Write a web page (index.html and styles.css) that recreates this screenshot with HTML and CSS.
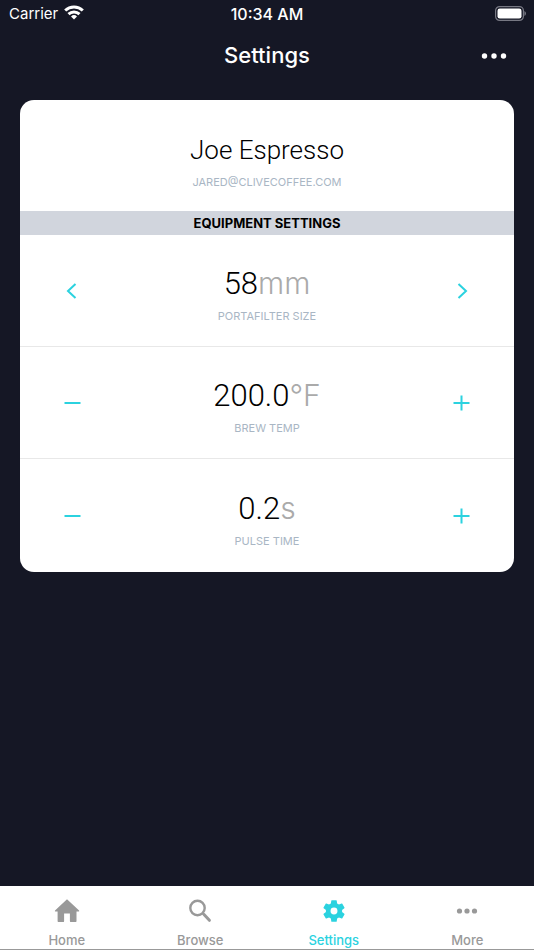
FILE: index.html
```html
<!DOCTYPE html>
<html lang="en">
<head>
<meta charset="utf-8">
<meta name="viewport" content="width=device-width, initial-scale=1">
<title>Settings</title>
<link rel="stylesheet" href="styles.css">
</head>
<body>
<div class="app">
  <div class="status">
    <div class="carrier">Carrier
      <svg width="20" height="15" viewBox="0 0 20 15" fill="none" stroke="#fff" stroke-width="3"><path d="M1.2 5.5a12.8 12.8 0 0 1 17.6 0"/><path d="M4.5 9.2a8 8 0 0 1 11 0"/><path d="M10 14.5 7 11.5a4.4 4.4 0 0 1 6 0z" fill="#fff" stroke="none"/></svg>
    </div>
    <time class="clock">10:34 AM</time>
    <svg class="battery" width="31" height="15" viewBox="0 0 31 15"><rect x=".6" y=".6" width="27.8" height="13.8" rx="4" fill="none" stroke="#777883" stroke-width="1.2"/><rect x="2.5" y="2.5" width="24" height="10" rx="2.3" fill="#fff"/><path d="M29.4 5v5q1.6-.8 1.6-2.5T29.4 5z" fill="#777883"/></svg>
  </div>
  <header class="nav">
    <h1>Settings</h1>
    <button class="menu" aria-label="Options"><svg width="26" height="6" viewBox="0 0 26 6" fill="#fff"><circle cx="3.5" cy="3" r="2.7"/><circle cx="13" cy="3" r="2.7"/><circle cx="22.5" cy="3" r="2.7"/></svg></button>
  </header>
  <main>
    <section class="card">
      <div class="profile">
        <h2 class="name">Joe Espresso</h2>
        <p class="caption">JARED@CLIVECOFFEE.COM</p>
      </div>
      <h3 class="band">EQUIPMENT SETTINGS</h3>
      <div class="row">
        <button class="step" aria-label="Previous size"><svg width="18" height="18" viewBox="0 0 18 18"><path d="M12.5 2 5 9l7.5 7"/></svg></button>
        <div class="reading"><p class="value">58<span>mm</span></p><p class="caption">PORTAFILTER SIZE</p></div>
        <button class="step" aria-label="Next size"><svg width="18" height="18" viewBox="0 0 18 18"><path d="m5.5 2 7.5 7-7.5 7"/></svg></button>
      </div>
      <div class="row">
        <button class="step" aria-label="Decrease brew temp"><svg width="18" height="18" viewBox="0 0 18 18"><path d="M1.5 9h16"/></svg></button>
        <div class="reading"><p class="value">200.0<span>°F</span></p><p class="caption">BREW TEMP</p></div>
        <button class="step" aria-label="Increase brew temp"><svg width="18" height="18" viewBox="0 0 18 18"><path d="M.5 9h16M8.500 1.500v15"/></svg></button>
      </div>
      <div class="row">
        <button class="step" aria-label="Decrease pulse time"><svg width="18" height="18" viewBox="0 0 18 18"><path d="M1.5 9h16"/></svg></button>
        <div class="reading"><p class="value">0.2<span>s</span></p><p class="caption">PULSE TIME</p></div>
        <button class="step" aria-label="Increase pulse time"><svg width="18" height="18" viewBox="0 0 18 18"><path d="M.5 9h16M8.500 1.500v15"/></svg></button>
      </div>
    </section>
  </main>
  <nav class="tabs">
    <a href="#home"><svg width="26" height="26" viewBox="0 0 26 26"><path d="M13 1.200 1 12.600q-.5 1 .4 1h2.200v9.300q0 1.200 1.200 1.200h4.200q1.100 0 1.100-1.200v-7.300h5.800v7.300q0 1.200 1.200 1.200h4.200q1.200 0 1.200-1.200v-9.300h2.200q.9 0 .4-1z"/></svg>Home</a>
    <a href="#browse"><svg width="26" height="26" viewBox="0 0 26 26" fill="none" stroke="#999" stroke-width="2.4"><circle cx="10.500" cy="10" r="7.200" fill="none"/><path d="m15.500 15 1.500 1.500"/><path d="m17 16.500 5.400 5.800" stroke-width="3" stroke-linecap="round"/></svg>Browse</a>
    <a href="#settings" class="active" aria-current="page"><svg width="26" height="26" viewBox="0 0 24 24"><path d="M19.43 12.98c.04-.32.07-.64.07-.98s-.03-.66-.07-.98l2.11-1.65c.19-.15.24-.42.12-.64l-2-3.46c-.12-.22-.39-.3-.61-.22l-2.49 1c-.52-.4-1.08-.73-1.69-.98l-.38-2.65A.488.488 0 0 0 14 2h-4c-.25 0-.46.18-.49.42l-.38 2.65c-.61.25-1.17.59-1.69.98l-2.49-1c-.23-.09-.49 0-.61.22l-2 3.46c-.13.22-.07.49.12.64l2.11 1.65c-.04.32-.07.65-.07.98s.03.66.07.98l-2.11 1.65c-.19.15-.24.42-.12.64l2 3.46c.12.22.39.3.61.22l2.49-1c.52.4 1.08.73 1.69.98l.38 2.65c.03.24.24.42.49.42h4c.25 0 .46-.18.49-.42l.38-2.65c.61-.25 1.17-.59 1.69-.98l2.49 1c.23.09.49 0 .61-.22l2-3.46c.12-.22.07-.49-.12-.64l-2.11-1.65zM12 15.200a3.200 3.200 0 1 1 0-6.400 3.200 3.200 0 0 1 0 6.400z"/></svg>Settings</a>
    <a href="#more"><svg width="26" height="26" viewBox="0 0 26 26"><circle cx="5.500" cy="13" r="2.600"/><circle cx="13" cy="13" r="2.600"/><circle cx="20.500" cy="13" r="2.600"/></svg>More</a>
  </nav>
</div>
</body>
</html>
```
FILE: styles.css
```css
* { box-sizing: border-box; }
body { margin: 0; background: #151725; color: #000; font-family: Inter, "Liberation Sans", sans-serif; }
h1, h2, h3, p { margin: 0; font-weight: 400; }
button { padding: 0; border: 0; background: none; cursor: pointer; }
svg { display: block; }
.app { min-height: 100vh; display: flex; flex-direction: column; }
.status { display: grid; grid-template-columns: 1fr auto 1fr; align-items: center; height: 27px; padding: 0 8px; color: #fff; font-size: 15px; }
.carrier { display: flex; align-items: center; gap: 6px; padding-left: 1px; }
.carrier svg { margin-bottom: 2px; }
.clock { font-weight: 500; font-size: 16px; }
.battery { justify-self: end; }
.nav { display: grid; grid-template-columns: 1fr auto 1fr; align-items: center; height: 56px; padding: 0 27px; color: #fff; }
.nav h1 { grid-column: 2; font-size: 22px; line-height: 28px; font-weight: 500; }
.menu { justify-self: end; padding-top: 2px; }
main { flex: 1; padding: 17px 20px; }
.card { overflow: hidden; background: #fff; border-radius: 14px; }
.profile, .row { height: 112px; text-align: center; }
.profile { height: 111px; padding-top: 30px; }
.name, .value { font-family: Roboto, "Liberation Sans", sans-serif; font-weight: 300; line-height: 40px; }
.name { font-size: 26px; }
.value { font-size: 31px; }
.value span { color: #aaa; font-family: Inter, "Liberation Sans", sans-serif; font-size: 30px; font-weight: 300; }
.caption { margin-top: 4px; color: #a9b6c4; font-size: 11px; line-height: 16px; font-weight: 400; }
.band { background: #d1d5dd; text-align: center; font-size: 13px; line-height: 24px; font-weight: 700; }
.row { display: grid; grid-template-columns: 104px 1fr 104px; align-items: center; border-bottom: 1px solid #e8e8e8; }
.row:last-child { height: 113px; border-bottom: 0; }
.reading { padding-top: 6px; }
.step { height: 64px; display: grid; place-items: center; }
.step svg { fill: none; stroke: #2bd2df; stroke-width: 2; }
.tabs { display: grid; grid-template-columns: repeat(4, 1fr); height: 64px; background: #fff; border-bottom: 1px solid #999; }
.tabs a { display: flex; flex-direction: column; align-items: center; gap: 8px; padding-top: 12px; color: #999; font-size: 13px; line-height: 16px; font-weight: 500; text-decoration: none; }
.tabs svg { fill: currentColor; }
.tabs .active { color: #2bd2df; }
```
